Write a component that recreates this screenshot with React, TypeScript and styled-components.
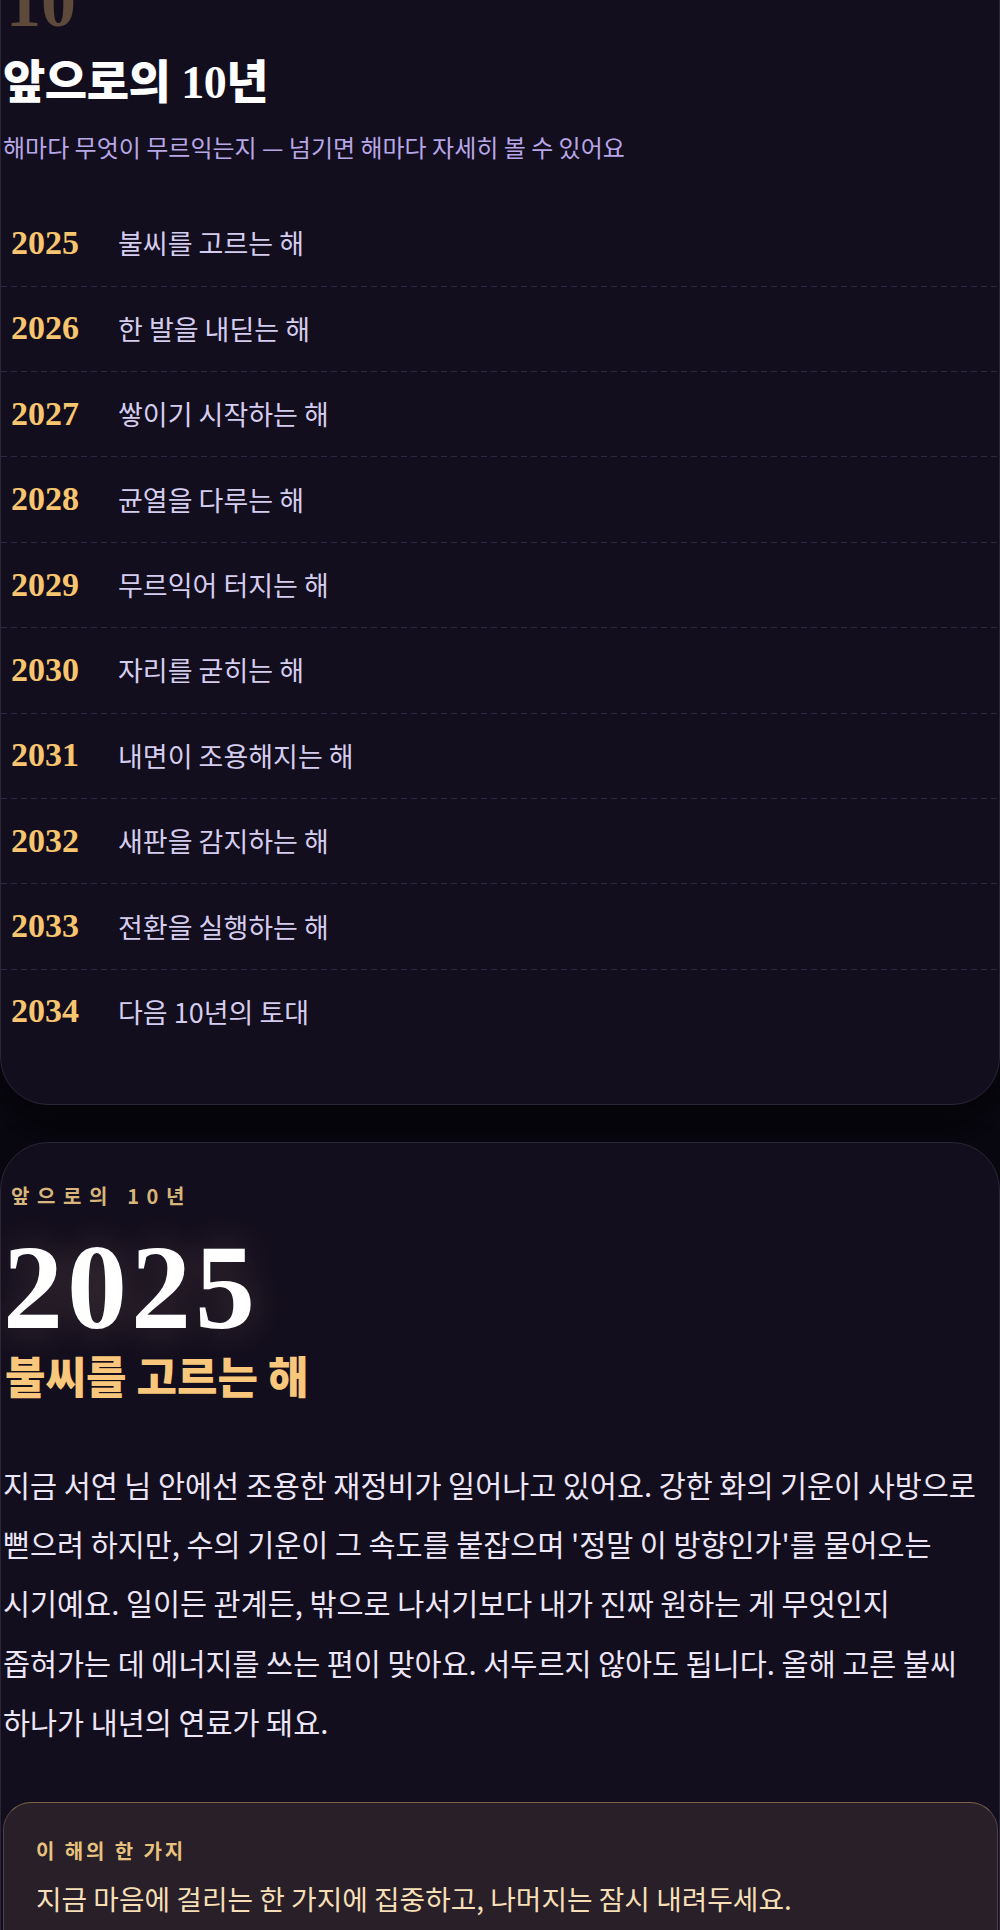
import styled, { createGlobalStyle } from "styled-components"

const GlobalStyle = createGlobalStyle`
    html, body {
        margin    : 0;
        padding   : 0;
        background: #0a0811;
    }
    body {
        font-family: "Noto Sans CJK KR", "Noto Sans", sans-serif;
        word-break : keep-all;
        overflow   : hidden;
    }
`

const SERIF = `"Liberation Serif", "Noto Sans CJK KR", serif`
const SANS  = `"Noto Sans CJK KR", "Noto Sans", sans-serif`

const Page = styled.main`
    display       : flex;
    flex-direction: column;
    gap           : 37px;
    margin-top    : -90px;
`

const Card = styled.section<{ $top: number; $bottom: number }>`
    position        : relative;
    box-sizing      : border-box;
    width           : 1000px;
    padding         : ${p => p.$top}px 1px ${p => p.$bottom}px 2px;
    border          : 1px solid #2b2636;
    border-radius   : 48px;
    background-color: #130e1d;
    box-shadow      : 0 24px 40px rgba(0, 0, 0, 0.55);
`

const BigNum = styled.div`
    margin-left: 3px;
    font-family: ${SERIF};
    font-size  : 70px;
    font-weight: 700;
    line-height: 1;
    color      : #5e4a3a;
`

const Title = styled.h2`
    margin        : 17px 0 0;
    font-family   : ${SERIF};
    font-size     : 46px;
    font-weight   : 900;
    line-height   : 1.2;
    letter-spacing: -0.5px;
    color         : #ffffff;
`

const Sub = styled.p`
    margin     : 20px 0 0;
    font-family: ${SANS};
    font-size  : 24px;
    line-height: 1.4;
    color      : #b8a7e8;
`

const List = styled.ul`
    list-style: none;
    margin    : 36.5px 0 0;
    padding   : 0;
`

const Row = styled.li<{ $first?: boolean }>`
    box-sizing           : border-box;
    display              : grid;
    grid-template-columns: 117px 1fr;
    align-items          : center;
    height               : 85.4px;
    margin-left          : -2px;
    margin-right         : -1px;
    background-image     : ${p => p.$first
        ? 'none'
        : 'linear-gradient(to right, rgba(150, 132, 200, 0.22) 60%, transparent 0)'};
    background-size      : 10px 1px;
    background-repeat    : repeat-x;
    background-position  : 0 0;
`

const Year = styled.span`
    padding-left: 10px;
    font-family : ${SERIF};
    font-size   : 34px;
    font-weight : 700;
    line-height : 1;
    color       : #f7c56f;
`

const Label = styled.span`
    font-family: ${SANS};
    font-size  : 27px;
    line-height: 1;
    color      : #d5cdef;
`

const Kicker = styled.div`
    margin-left   : 8px;
    font-family   : ${SANS};
    font-size     : 20px;
    font-weight   : 700;
    line-height   : 1.4;
    letter-spacing: 7.6px;
    color         : #d8b57a;
`

const Hero = styled.div`
    margin-top    : 18px;
    font-family   : ${SERIF};
    font-size     : 120px;
    font-weight   : 700;
    line-height   : 1;
    letter-spacing: 4px;
    color         : #ffffff;
    text-shadow   : 0 0 36px rgba(255, 205, 170, 0.22);
`

const Theme = styled.h3`
    margin     : -0.5px 0 0 2px;
    font-family: ${SANS};
    font-size  : 44px;
    font-weight: 900;
    line-height: 1.3;
    color      : #f8c77b;
`

const Body = styled.p`
    margin     : 50.2px 0 0;
    font-family: ${SANS};
    font-size  : 29.4px;
    line-height: 59.4px;
    color      : #ece6f7;
`

const Focus = styled.div`
    margin          : 50.7px 0 0;
    padding         : 34px 32px 40px;
    border          : 1px solid #4d4045;
    border-top-color: #7a6449;
    border-radius   : 28px;
    background-color: #281f28;
`

const FocusLabel = styled.div`
    font-family   : ${SANS};
    font-size     : 20px;
    font-weight   : 700;
    line-height   : 1.4;
    letter-spacing: 2.9px;
    color         : #e8c27f;
`

const FocusText = styled.p`
    margin     : 12.6px 0 0;
    font-family: ${SANS};
    font-size  : 27.8px;
    line-height: 1.5;
    color      : #f6dfb6;
`

const years: [string, string][] = [
    ['2025', '불씨를 고르는 해'],
    ['2026', '한 발을 내딛는 해'],
    ['2027', '쌓이기 시작하는 해'],
    ['2028', '균열을 다루는 해'],
    ['2029', '무르익어 터지는 해'],
    ['2030', '자리를 굳히는 해'],
    ['2031', '내면이 조용해지는 해'],
    ['2032', '새판을 감지하는 해'],
    ['2033', '전환을 실행하는 해'],
    ['2034', '다음 10년의 토대'],
]

export default function App() {
    return (
        <>
            <GlobalStyle />
            <Page>
                <Card $top={57} $bottom={50}>
                    <BigNum>10</BigNum>
                    <Title>앞으로의 10년</Title>
                    <Sub>해마다 무엇이 무르익는지 — 넘기면 해마다 자세히 볼 수 있어요</Sub>
                    <List>
                        {years.map(([y, label], i) => (
                            <Row key={y} $first={i === 0}>
                                <Year>{y}</Year>
                                <Label>{label}</Label>
                            </Row>
                        ))}
                    </List>
                </Card>

                <Card $top={38.5} $bottom={60}>
                    <Kicker>앞으로의 10년</Kicker>
                    <Hero>2025</Hero>
                    <Theme>불씨를 고르는 해</Theme>
                    <Body>
                        지금 서연 님 안에선 조용한 재정비가 일어나고 있어요. 강한 화의 기운이 사방으로
                        뻗으려 하지만, 수의 기운이 그 속도를 붙잡으며 '정말 이 방향인가'를 물어오는
                        시기예요. 일이든 관계든, 밖으로 나서기보다 내가 진짜 원하는 게 무엇인지
                        좁혀가는 데 에너지를 쓰는 편이 맞아요. 서두르지 않아도 됩니다. 올해 고른 불씨
                        하나가 내년의 연료가 돼요.
                    </Body>
                    <Focus>
                        <FocusLabel>이 해의 한 가지</FocusLabel>
                        <FocusText>지금 마음에 걸리는 한 가지에 집중하고, 나머지는 잠시 내려두세요.</FocusText>
                        <FocusText>&nbsp;</FocusText>
                    </Focus>
                </Card>
            </Page>
        </>
    )
}
